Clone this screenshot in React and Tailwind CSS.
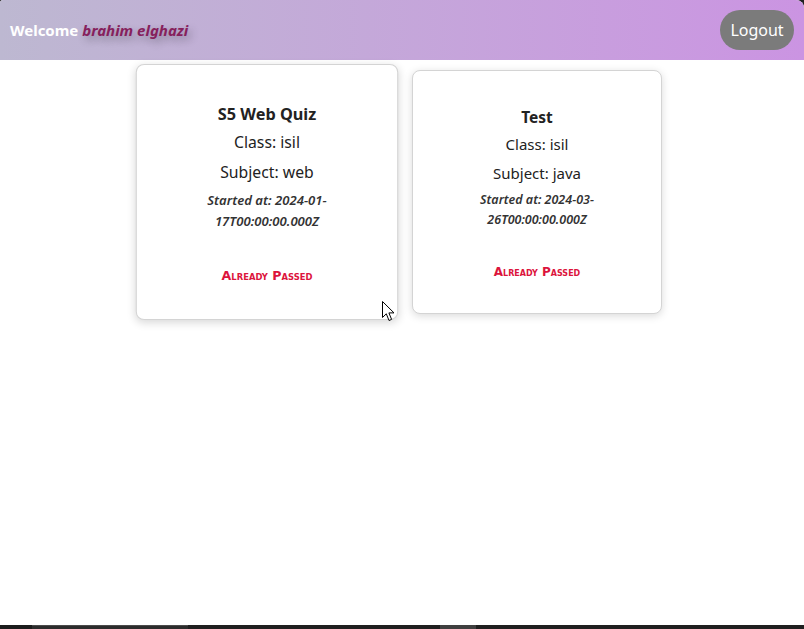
const quizzes = [
  { title: "S5 Web Quiz", cls: "isil", subject: "web", started: "2024-01-17T00:00:00.000Z", hovered: true },
  { title: "Test", cls: "isil", subject: "java", started: "2024-03-26T00:00:00.000Z" },
];

function QuizCard({ quiz }) {
  return (
    <div
      className={
        "w-[250px] rounded-lg border border-[#d4d4d4] bg-white pt-[35px] pb-[31px] px-[20px] text-center shadow-[0_2px_8px_rgba(0,0,0,0.15)] " +
        (quiz.hovered ? "scale-105" : "")
      }
    >
      <h3 className="text-[15.5px] font-bold leading-[22px] text-[#222]">{quiz.title}</h3>
      <p className="mt-[5px] text-[15px] leading-[22px] text-[#222]">Class: {quiz.cls}</p>
      <p className="mt-[7px] text-[15px] leading-[22px] text-[#222]">Subject: {quiz.subject}</p>
      <p className="mx-auto mt-[6px] w-[140px] text-[12.5px] font-semibold italic leading-[20px] text-[#333]">
        Started at: {quiz.started}
      </p>
      <p className="mt-[32px] font-['DejaVu_Sans',sans-serif] text-[12px] font-bold leading-[20px] text-[#dc143c] [font-variant:small-caps]">
        Already Passed
      </p>
    </div>
  );
}

export default function App() {
  return (
    <div className="bg-[#202020] font-['Noto_Sans',sans-serif]">
      <div className="relative flex min-h-[625px] flex-col overflow-hidden rounded-tl-[3px] rounded-tr-[8px] bg-white">
        {/* Header */}
        <header className="flex h-[60px] items-center justify-between bg-linear-to-r from-[#bdb8d1] to-[#cb94e2] pl-[10px] pr-[10px]">
          <h2 className="text-[15px] font-bold text-white">
            Welcome{" "}
            <span className="italic text-[#86205c] [text-shadow:3px_4px_8px_rgba(0,0,0,0.3)]">brahim elghazi</span>
          </h2>
          <button className="h-[40px] w-[74px] rounded-full bg-[#7b7b7b] text-[16px] text-white">Logout</button>
        </header>

        {/* Quizzes */}
        <main className="flex flex-1 items-start justify-center gap-[20px] pt-[10px]">
          {quizzes.map((q) => (
            <QuizCard key={q.title} quiz={q} />
          ))}
        </main>

        {/* mouse pointer */}
        <svg className="absolute left-[382px] top-[301px]" width="13" height="21" viewBox="0 0 13 21">
          <path d="M0.5 0.5 L0.5 16.5 L4.3 12.8 L7 19.5 L9.6 18.4 L6.9 11.9 L12 11.9 Z" fill="white" stroke="black" strokeWidth="1" />
        </svg>
      </div>

      {/* taskbar strip */}
      <div className="flex h-[4px]">
        <div className="w-[32px] bg-[#1c1c1c]" />
        <div className="w-[156px] border-t border-[#4a4a4a] bg-[#2c2c2c]" />
        <div className="w-[252px] bg-[#1f1f1f]" />
        <div className="w-[36px] bg-[#3f3f3f]" />
        <div className="flex-1 bg-[#1f1f1f]" />
      </div>
    </div>
  );
}
